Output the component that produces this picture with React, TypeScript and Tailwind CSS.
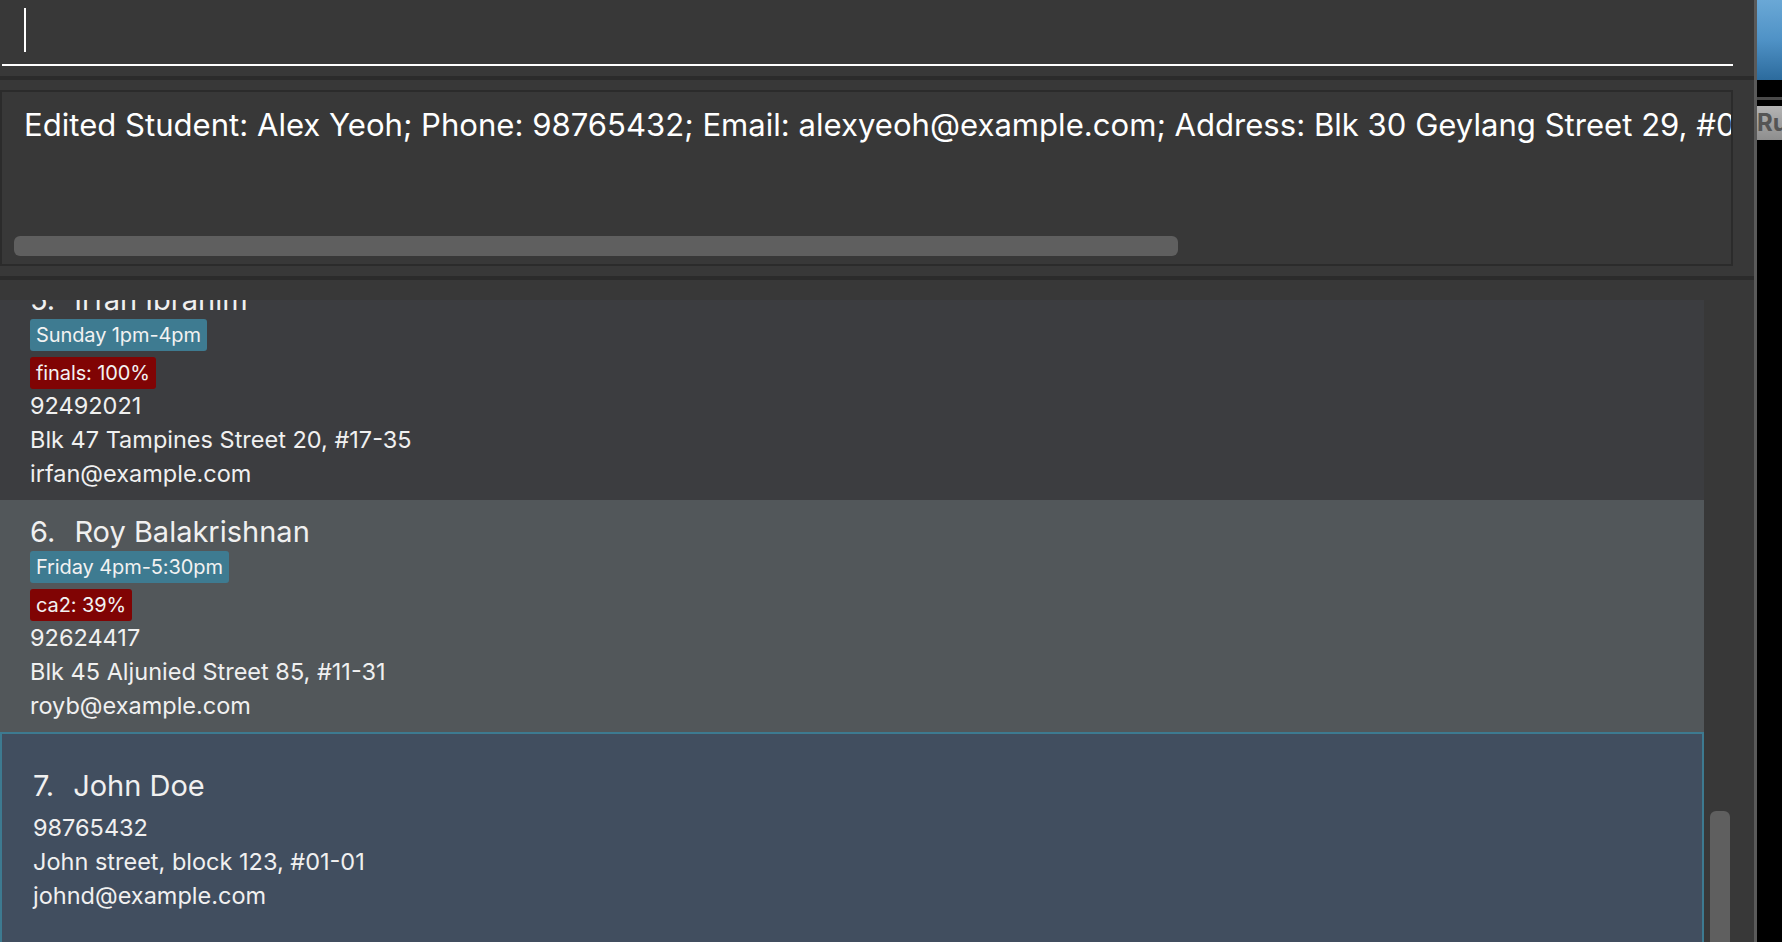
type Student = {
  index: number;
  name: string;
  slot?: string;
  grade?: string;
  phone: string;
  address: string;
  email: string;
};

const students: Student[] = [
  {
    index: 5,
    name: "Irfan Ibrahim",
    slot: "Sunday 1pm-4pm",
    grade: "finals: 100%",
    phone: "92492021",
    address: "Blk 47 Tampines Street 20, #17-35",
    email: "irfan@example.com",
  },
  {
    index: 6,
    name: "Roy Balakrishnan",
    slot: "Friday 4pm-5:30pm",
    grade: "ca2: 39%",
    phone: "92624417",
    address: "Blk 45 Aljunied Street 85, #11-31",
    email: "royb@example.com",
  },
];

function Tag({ text, tone }: { text: string; tone: "blue" | "red" }) {
  return (
    <div className="flex">
      <span
        className={`h-[32px] px-[6px] rounded-[3px] text-[20px] leading-[32px] tracking-[-0.1px] text-[#f2f2f2] ${
          tone === "blue" ? "bg-[#3e7b91]" : "bg-[#800404]"
        }`}
      >
        {text}
      </span>
    </div>
  );
}

function StudentCard({ student, shade }: { student: Student; shade: string }) {
  return (
    <div className={`flex flex-col pl-[30px] pt-[14px] pb-[9.5px] text-[#f0f0f0] ${shade}`}>
      <div className="flex gap-[19px] text-[29px] leading-[36.5px]">
        <span>{student.index}.</span>
        <span>{student.name}</span>
      </div>
      {student.slot && <Tag text={student.slot} tone="blue" />}
      {student.grade && (
        <div className="mt-[6px]">
          <Tag text={student.grade} tone="red" />
        </div>
      )}
      <div className="text-[23.5px] leading-[34px]">
        <div>{student.phone}</div>
        <div>{student.address}</div>
        <div>{student.email}</div>
      </div>
    </div>
  );
}

function SelectedCard() {
  return (
    <div className="flex flex-col border-2 border-[#3d7a90] bg-[#414e5f] pl-[31px] pt-[34px] pb-[40px] text-[#f0f0f0]">
      <div className="flex gap-[19px] text-[29px] leading-[36px]">
        <span>7.</span>
        <span>John Doe</span>
      </div>
      <div className="mt-[7px] text-[23.5px] leading-[34px]">
        <div>98765432</div>
        <div>John street, block 123, #01-01</div>
        <div>johnd@example.com</div>
      </div>
    </div>
  );
}

export default function App() {
  return (
    <div className="flex h-[942px] w-[1782px] overflow-hidden bg-black font-['Inter',sans-serif]">
      <div className="flex w-[1754px] flex-col bg-[#383838]">
        {/* command box */}
        <div className="flex h-[76px] flex-col">
          <div className="ml-[24px] mt-[8px] h-[44px] w-[2px] bg-white" />
          <div className="ml-[2px] mt-[12px] h-[2px] w-[1731px] bg-white" />
        </div>
        <div className="h-[4px] bg-[#2b2b2b]" />

        {/* result display */}
        <div className="h-[196px] py-[10px]">
          <div className="flex h-[176px] w-[1733px] flex-col overflow-hidden border-2 border-[#2b2b2b]">
            <div className="mt-[13px] overflow-hidden whitespace-nowrap pl-[22px] text-[31.1px] leading-[40px] text-white">
              Edited Student: Alex Yeoh; Phone: 98765432; Email: alexyeoh@example.com; Address: Blk 30 Geylang Street 29, #06-40; Tags: [Sunday 1pm-4pm]
            </div>
            <div className="mb-[8px] ml-[12px] mt-auto h-[20px] w-[1164px] rounded-[6px] bg-[#5f5f5f]" />
          </div>
        </div>
        <div className="h-[4px] bg-[#2b2b2b]" />

        {/* student list */}
        <div className="flex min-h-0 flex-1">
          <div className="flex w-[1704px] flex-col overflow-hidden pt-[20px]">
            <div className="flex flex-col overflow-hidden">
              <div className="-mt-[32px] flex flex-col">
                <StudentCard student={students[0]} shade="bg-[#3c3d40]" />
                <StudentCard student={students[1]} shade="bg-[#52575a]" />
                <SelectedCard />
              </div>
            </div>
          </div>
          <div className="flex w-[50px] flex-col pt-[531px]">
            <div className="ml-[6px] h-[200px] w-[20px] rounded-t-[6px] bg-[#5f5f5f]" />
          </div>
        </div>
      </div>

      <div className="w-[3px] bg-[#5a5a5a]" />

      {/* edge of the neighbouring window */}
      <div className="flex w-[25px] flex-col bg-black">
        <div className="h-[80px] bg-gradient-to-b from-[#6aa8d6] via-[#4f92c6] to-[#2c6b9d]" />
        <div className="mt-[17px] h-[3px] bg-[#4a4a4a]" />
        <div className="mt-[6px] h-[34px] overflow-hidden whitespace-nowrap bg-gradient-to-b from-[#b4b4b4] to-[#8e8e8e] text-[24px] font-bold leading-[34px] text-[#555555]">
          Ru
        </div>
      </div>
    </div>
  );
}
